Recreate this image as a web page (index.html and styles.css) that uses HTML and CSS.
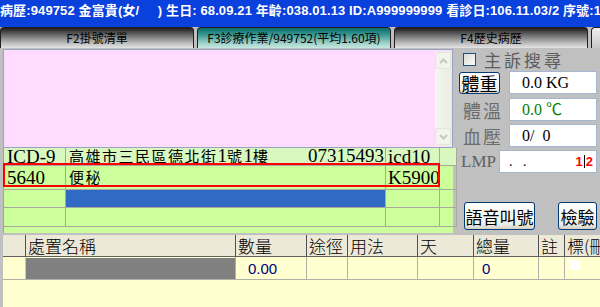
FILE: index.html
```html
<!DOCTYPE html>
<html lang="zh-Hant">
<head>
    <meta charset="UTF-8">
    <title>診療作業</title>
    <link rel="stylesheet" href="styles.css">
</head>
<body>

    <div class="titlebar">病歷:949752 金富貴(女/&nbsp;&nbsp;&nbsp;&nbsp;&nbsp;) 生日: 68.09.21 年齡:038.01.13 ID:A999999999 看診日:106.11.03/2 序號:1 案</div>

    <div class="tabs">
        <div class="tab">F2掛號清單</div>
        <div class="tab active">F3診療作業/949752(平均1.60項)</div>
        <div class="tab">F4歷史病歷</div>
        <div class="tab"></div>
    </div>

    <div class="workspace">
        <div class="left">
            <div class="memo">
                <div class="scrollbar">
                    <span class="arrow">
                        <svg width="9" height="6" viewBox="0 0 9 6"><path d="M1 5 L4.5 1.5 L8 5" fill="none" stroke="#c8c8c0" stroke-width="2"/></svg>
                    </span>
                    <span class="arrow">
                        <svg width="9" height="6" viewBox="0 0 9 6"><path d="M1 1 L4.5 4.5 L8 1" fill="none" stroke="#c8c8c0" stroke-width="2"/></svg>
                    </span>
                </div>
            </div>

            <div class="grid">
                <table class="diag">
                    <tr class="head">
                        <td>ICD-9</td>
                        <td>
                            <div class="addr">
                                <span><span class="cjk">高雄市三民區德北街</span>1<span class="cjk">號</span>1<span class="cjk">樓</span></span>
                                <span>07315493</span>
                            </div>
                        </td>
                        <td>icd10</td>
                        <td></td>
                    </tr>
                    <tr class="row1">
                        <td>5640</td>
                        <td><span class="cjk">便秘</span></td>
                        <td>K5900</td>
                        <td></td>
                    </tr>
                    <tr class="row2">
                        <td></td>
                        <td class="selected"></td>
                        <td></td>
                        <td></td>
                    </tr>
                    <tr class="row3">
                        <td></td>
                        <td></td>
                        <td></td>
                        <td></td>
                    </tr>
                </table>
                <div class="highlight"></div>
            </div>
        </div>

        <div class="vitals">
            <div class="search">
                <span class="checkbox"></span>
                <span class="search-label">主訴搜尋</span>
            </div>
            <div class="vital-row">
                <button class="btn weight">體重</button>
                <div class="field">0.0 KG</div>
            </div>
            <div class="vital-row">
                <span class="label">體溫</span>
                <div class="field green">0.0 ℃</div>
            </div>
            <div class="vital-row">
                <span class="label">血壓</span>
                <div class="field">0/&nbsp;&nbsp;0</div>
            </div>
            <div class="vital-row">
                <span class="label lmp">LMP</span>
                <div class="field lmp-field">
                    <span class="dots">.&nbsp;&nbsp;&nbsp;.</span>
                    <span class="lmp-val">1<span class="caret"></span>2</span>
                </div>
            </div>
            <div class="actions">
                <button class="btn call">語音叫號</button>
                <button class="btn lab">檢驗</button>
            </div>
        </div>
    </div>

    <div class="orders">
        <table>
            <tr class="head">
                <td class="c0"></td>
                <td class="c1">處置名稱</td>
                <td class="c2">數量</td>
                <td class="c3">途徑</td>
                <td class="c4">用法</td>
                <td class="c5">天</td>
                <td class="c6">總量</td>
                <td class="c7">註</td>
                <td class="c8">標(刪除)</td>
            </tr>
            <tr class="data">
                <td></td>
                <td><div class="name-cell"></div></td>
                <td class="num">0.00</td>
                <td></td>
                <td></td>
                <td></td>
                <td class="num">0</td>
                <td></td>
                <td><span class="mark"></span></td>
            </tr>
        </table>
    </div>

</body>
</html>
```

FILE: styles.css
```css
body {
    margin: 0;
    width: 600px;
    height: 307px;
    overflow: hidden;
    background-color: #c0c0c0;
    font-family: "Noto Sans CJK TC", sans-serif;
}

.titlebar {
    height: 27px;
    line-height: 26px;
    background-color: #0a40dc;
    color: #fff;
    font: bold 13px "Liberation Sans", "Noto Sans CJK TC", sans-serif;
    letter-spacing: 0.12px;
    white-space: nowrap;
    overflow: hidden;
}

.tabs {
    display: flex;
    gap: 3px;
    height: 21px;
    background: #c0c0c0;
    white-space: nowrap;
    overflow: hidden;
}
.tab {
    flex: 0 0 194px;
    box-sizing: border-box;
    border: 1px solid #202020;
    border-bottom: none;
    border-radius: 4px 4px 0 0;
    background: linear-gradient(#1c1c1c, #6a6a6a 35%, #bcbcbc 75%, #e4e4e4);
    font-size: 12px;
    line-height: 20px;
    text-align: center;
    color: #000;
}
.tab.active {
    background: linear-gradient(#0a6868, #3c9a94 35%, #9fd0c8 75%, #c6e8e0);
}
.tab:last-child {
    flex-basis: 20px;
    background: linear-gradient(#f0f0f0, #c8c8c8);
}

.workspace {
    display: flex;
    height: 185px;
}

.left {
    width: 450px;
    padding-left: 3px;
}

.memo {
    margin-top: 1px;
    height: 97px;
    border: 1px solid #98a4c4;
    background-color: #ffdcff;
    display: flex;
    justify-content: flex-end;
}
.scrollbar {
    width: 16px;
    margin: 1px 1px 1px 0;
    background: linear-gradient(90deg, #f6f6f2, #ecece4);
    display: flex;
    flex-direction: column;
    justify-content: space-between;
}
.arrow {
    height: 15px;
    margin: 1px 0;
    border: 1px solid #e4e4dc;
    border-radius: 2px;
    background: #f4f4ee;
    display: flex;
    align-items: center;
    justify-content: center;
}

.grid {
    position: relative;
    height: 85px;
    background-color: #ccff9c;
    border-left: 1px solid #a0a0a0;
    box-sizing: border-box;
}
.diag {
    border-collapse: collapse;
    table-layout: fixed;
    width: 449px;
    font: 19px "Liberation Serif", "Noto Sans CJK TC", serif;
    color: #000;
}
.diag td {
    border: 1px solid #a8a8a0;
    padding: 0 0 0 3px;
    white-space: nowrap;
    line-height: 15px;
}
.diag td:first-child { width: 58px; border-left: none; }
.diag td:nth-child(2) { width: 316px; }
.diag td:nth-child(3) { width: 51px; padding-left: 2px; }
.diag td:nth-child(4) { width: 13px; }
.diag .head td {
    height: 15px;
    border-top: none;
    background-color: #d8f8c0;
}
.diag .row1 td { height: 23px; }
.diag .row2 td { height: 17px; }
.diag .row3 td { height: 18px; }
.diag td.selected {
    background-color: #316ac5;
}
.addr {
    display: flex;
    justify-content: space-between;
    padding-right: 1px;
}
.cjk {
    font-size: 15px;
    letter-spacing: 1.5px;
}
.highlight {
    position: absolute;
    left: -1px;
    top: 15px;
    width: 437px;
    height: 24px;
    border: 2px solid #ff0000;
    box-sizing: border-box;
}

.vitals {
    flex: 1;
    padding: 4px 3px 0 6px;
    display: flex;
    flex-direction: column;
}
.search {
    display: flex;
    align-items: center;
    height: 15px;
    margin-bottom: 4px;
}
.checkbox {
    width: 11px;
    height: 11px;
    margin-left: 4px;
    border: 1px solid #1c5180;
    background: linear-gradient(135deg, #dcdcd6, #fbfbf8);
}
.search-label {
    margin-left: 8px;
    font-size: 17px;
    line-height: 15px;
    letter-spacing: 3px;
    color: #5c5c5c;
}
.vital-row {
    display: flex;
    align-items: center;
    height: 23px;
    margin-bottom: 3px;
}
.vital-row:nth-child(2) { margin-bottom: 4px; }
.label {
    margin-left: 4px;
    font-size: 18px;
    letter-spacing: 2px;
    color: #6c6c6c;
}
.label.lmp {
    margin-left: 2px;
    font: 17px "Liberation Serif", serif;
    letter-spacing: 0;
    color: #606060;
}
.field {
    margin-left: auto;
    width: 88px;
    height: 23px;
    box-sizing: border-box;
    border: 1px solid #a4b6d2;
    background: #fff;
    padding-left: 12px;
    font: 16px "Liberation Serif", "Noto Sans CJK TC", serif;
    line-height: 21px;
    color: #000;
}
.field.green {
    color: #008000;
}
.field.lmp-field {
    width: 98px;
    display: flex;
    justify-content: space-between;
    padding: 0 3px 0 9px;
}
.dots {
    font-size: 14px;
}
.lmp-val {
    color: #ff0000;
    font: bold 13px "Liberation Sans", sans-serif;
    line-height: 21px;
}
.caret {
    display: inline-block;
    width: 1px;
    height: 13px;
    margin: 0 1px;
    background: #000;
    vertical-align: -2px;
}

.btn {
    box-sizing: border-box;
    border: 1px solid #003c74;
    border-radius: 3px;
    background: linear-gradient(#ffffff, #f0f0ea 80%, #d6d0c4);
    font: 17px "Noto Sans CJK TC", sans-serif;
    color: #000;
    padding: 0;
    line-height: 1;
}
.btn.weight {
    width: 41px;
    height: 22px;
    font-size: 18px;
}
.actions {
    display: flex;
    justify-content: space-between;
    margin-top: 26px;
    padding-left: 5px;
}
.btn.call {
    width: 71px;
    height: 28px;
}
.btn.lab {
    width: 39px;
    height: 28px;
}

.orders {
    margin: 2px 0 0 3px;
    height: 72px;
    background-color: #ffffd0;
    overflow: hidden;
}
.orders table {
    border-collapse: collapse;
    table-layout: fixed;
    width: 640px;
}
.orders td {
    padding: 0 0 0 2px;
    white-space: nowrap;
    overflow: hidden;
}
.orders .head td {
    height: 21px;
    background-color: #ece9d8;
    border-right: 1px solid #505050;
    border-bottom: 1px solid #606060;
    font-size: 17px;
    font-weight: 300;
    line-height: 21px;
    color: #000;
}
.orders .c0 { width: 20px; }
.orders .c1 { width: 207px; }
.orders .c2 { width: 68px; }
.orders .c3 { width: 38px; }
.orders .c4 { width: 67px; }
.orders .c5 { width: 53px; }
.orders .c6 { width: 62px; }
.orders .c7 { width: 23px; }
.orders .c8 { width: 80px; }
.orders .data td {
    height: 22px;
    border-right: 1px solid #b0b0a8;
    border-bottom: 1px solid #b0b0a8;
}
.orders .data td:first-child {
    border-right-color: #c8c8c0;
}
.name-cell {
    height: 21px;
    margin-left: -2px;
    background-color: #808080;
}
.num {
    color: #000080;
    font: 15px "Liberation Sans", sans-serif;
}
.orders .data td.num {
    padding-left: 12px;
}
.orders .data td:nth-child(7) {
    padding-left: 8px;
}
.mark {
    display: block;
    width: 11px;
    height: 10px;
    margin: -6px 0 0 2px;
    background: #fff;
}
```
